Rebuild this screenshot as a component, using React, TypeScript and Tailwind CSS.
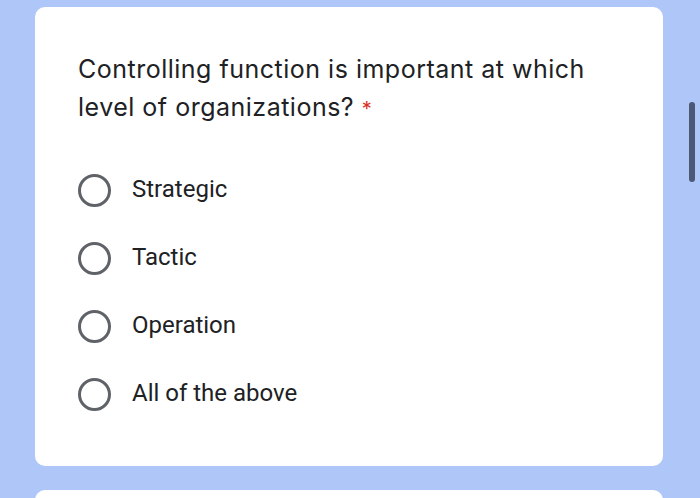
import React from 'react';

const options = ['Strategic', 'Tactic', 'Operation', 'All of the above'];

export default function App() {
  return (
    <div className="relative w-[700px] h-[498px] overflow-hidden bg-[#afc7f8] pt-[7px] pl-[35px]">
      {/* Question card */}
      <div className="w-[628px] h-[459px] bg-white rounded-[10px] pt-[43px] pl-[43px]">
        <h1
          className="w-[525px] text-[25px] tracking-[0.5px] leading-[38px] text-[#202124]"
          style={{ fontFamily: 'Inter, "Noto Sans", sans-serif' }}
        >
          Controlling function is important at which level of organizations?{' '}
          <span className="text-[#d93025] text-[20px]">*</span>
        </h1>

        <div className="mt-[28px] flex flex-col">
          {options.map((opt) => (
            <label key={opt} className="flex h-[68px] items-center">
              <span className="w-[33px] h-[33px] shrink-0 rounded-full border-[3px] border-[#5f6368]" />
              <span
                className="ml-[21px] text-[24px] text-[#202124] leading-none -mt-[2px]"
                style={{ fontFamily: 'Roboto, "Liberation Sans", sans-serif' }}
              >
                {opt}
              </span>
            </label>
          ))}
        </div>
      </div>

      {/* Next card peeking in */}
      <div className="mt-[24px] w-[628px] h-[40px] bg-white rounded-[10px]" />

      {/* Scrollbar thumb */}
      <div className="absolute left-[689px] top-[102px] w-[6px] h-[80px] rounded-full bg-[#4b5876]" />
    </div>
  );
}
